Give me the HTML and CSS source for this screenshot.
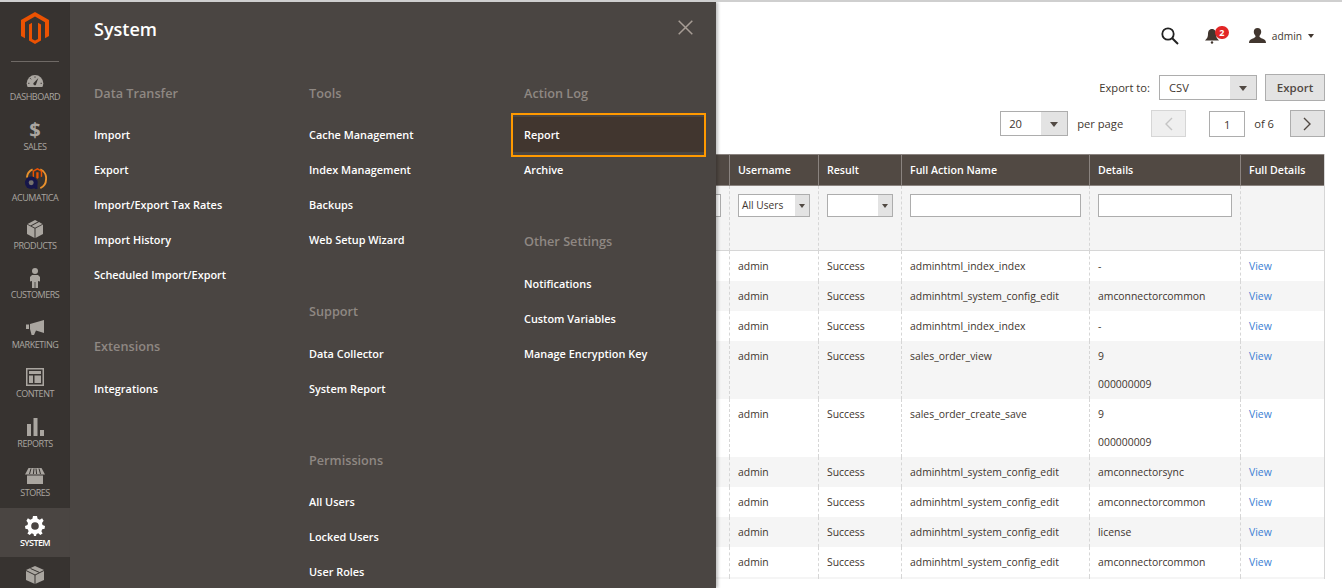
FILE: index.html
```html
<!DOCTYPE html>
<html lang="en">
<head>
    <meta charset="UTF-8">
    <meta name="viewport" content="width=device-width, initial-scale=1.0">
    <title>Action Log Report</title>
    <link rel="stylesheet" href="styles.css">
</head>
<body>
    <div class="page">
        <!-- left menu -->
        <aside class="sidebar">
            <div class="logo">
                <svg width="28" height="32" viewBox="0 0 28 32"><path fill="#eb5202" d="M14 0L28 8V24L24 26.3V10.2L14 4.5L4 10.2V26.3L0 24V8Z"/><path fill="#eb5202" d="M14 32L8 28.6V12.5L11 10.8V26.9L14 28.6L17 26.9V10.8L20 12.5V28.6Z"/></svg>
            </div>
            <nav class="side-nav">
                <a class="side-item">
                    <span class="side-icon"><svg class="icon-gauge" width="18" height="12" viewBox="0 0 18 13"><path fill="#aaa6a0" d="M9 0A9 9 0 0 0 0 9C0 10.500 .4 11.800 1 13H17C17.600 11.800 18 10.500 18 9A9 9 0 0 0 9 0Z"/><path fill="#373330" d="M12.600 3.200L8 8.200A1.600 1.600 0 1 0 10.400 9.600Z"/><path stroke="#373330" stroke-width="1" d="M3 9H1.500M4.800 4.600L3.700 3.500M9 3V1.500M15 9H16.500"/></svg></span>
                    <span class="side-label">Dashboard</span>
                </a>
                <a class="side-item">
                    <span class="side-icon side-dollar">$</span>
                    <span class="side-label">Sales</span>
                </a>
                <a class="side-item side-item-acumatica">
                    <span class="side-icon"><svg width="23" height="23" viewBox="0 0 24 24"><path fill="none" stroke="#e8912d" stroke-width="2" d="M3 11A10 10 0 0 1 9 2.500M17 2.500A10 10 0 0 1 23 13A10 10 0 0 1 17 22"/><path fill="#eb5202" d="M14 1L19 3.800V10L17.500 10.800V4.800L14 2.900L10.500 4.800V10.800L9 10V3.800Z"/><path fill="#eb5202" d="M12.800 5.500H15.200V11.500L14 12.200L12.800 11.500Z"/><circle cx="7.500" cy="16.500" r="6.500" fill="#16164a"/><circle cx="7.500" cy="16.500" r="2.600" fill="#77736f"/><rect x="11" y="14" width="3" height="9" fill="#16164a"/></svg></span>
                    <span class="side-label">Acumatica</span>
                </a>
                <a class="side-item">
                    <span class="side-icon"><svg width="16" height="18" viewBox="0 0 16 18"><path fill="#aaa6a0" d="M0 4.500L7.500 8.500V18L0 14ZM16 4.500V14L8.500 18V8.500ZM8 0L11 1.500L3.500 5.500L.6 4ZM12 2L15.400 4L8 7.800L4.600 6Z"/></svg></span>
                    <span class="side-label">Products</span>
                </a>
                <a class="side-item">
                    <span class="side-icon"><svg width="10" height="20" viewBox="0 0 10 20"><circle cx="5" cy="3" r="3" fill="#aaa6a0"/><path fill="#aaa6a0" d="M2 7H8L10 9V13.500L8 13V20H5.400V14H4.600V20H2V13L0 13.500V9Z"/></svg></span>
                    <span class="side-label">Customers</span>
                </a>
                <a class="side-item">
                    <span class="side-icon"><svg width="18" height="15" viewBox="0 0 18 15"><path fill="#aaa6a0" d="M0 4.500H3V9H0ZM4 4L18 0V13L10 10.500L8 15H5.600L4 9Z"/></svg></span>
                    <span class="side-label">Marketing</span>
                </a>
                <a class="side-item">
                    <span class="side-icon"><svg width="18" height="18" viewBox="0 0 18 18"><path fill="#aaa6a0" fill-rule="evenodd" d="M0 0H18V18H0ZM1.500 1.500V16.500H16.500V1.500ZM3 3H15V6H3ZM3 7.500H7V15H3ZM8.500 7.500H15V15H8.500Z"/></svg></span>
                    <span class="side-label">Content</span>
                </a>
                <a class="side-item">
                    <span class="side-icon"><svg width="17" height="18" viewBox="0 0 17 18"><path fill="#aaa6a0" d="M0 6H4V18H0ZM6.500 0H10.500V18H6.500ZM13 12H17V18H13Z"/></svg></span>
                    <span class="side-label">Reports</span>
                </a>
                <a class="side-item">
                    <span class="side-icon"><svg width="20" height="16" viewBox="0 0 20 16"><path fill="#aaa6a0" d="M3.500 0H16.500L20 6.500H0ZM2 7.500H18V16H2Z"/><path stroke="#373330" stroke-width="1" d="M6 0.500L4.500 6M9 0.500L8.400 6M11 0.500L11.600 6M14 0.500L15.500 6"/></svg></span>
                    <span class="side-label">Stores</span>
                </a>
                <a class="side-item side-item-active">
                    <span class="side-icon"><svg width="20" height="20" viewBox="0 0 20 20"><path fill="#fff" fill-rule="evenodd" d="M8 0H12L12.600 2.800L14.800 3.700L17.100 2.200L18.600 4.700L17 6.900L17.500 9L20 10L19.600 12.700L17.200 13.300L16.400 15.300L17.600 17.500L15.300 19L13.300 17.300L11.500 18L11 20H9L8.500 18L6.700 17.300L4.700 19L2.400 17.500L3.600 15.300L2.800 13.300L.4 12.700L0 10L2.500 9L3 6.900L1.400 4.700L2.900 2.200L5.200 3.700L7.400 2.800ZM10 6.200A3.800 3.800 0 1 0 10 13.800A3.800 3.800 0 1 0 10 6.200Z"/></svg></span>
                    <span class="side-label">System</span>
                </a>
                <a class="side-item">
                    <span class="side-icon"><svg width="18" height="18" viewBox="0 0 18 18"><path fill="#aaa6a0" d="M9 0L18 4V14L9 18L0 14V4Z"/><path stroke="#373330" fill="none" d="M0 4.500L9 9L18 4.500M9 9V18M4.500 2.500L13.500 6.500"/></svg></span>
                </a>
            </nav>
        </aside>

        <!-- grid page behind the menu -->
        <main class="content">
            <header class="topbar">
                <svg class="search-icon" width="18" height="18" viewBox="0 0 18 18"><circle cx="7" cy="7" r="5.700" fill="none" stroke="#222" stroke-width="1.800"/><path stroke="#222" stroke-width="2" d="M11.200 11.200L17 17"/></svg>
                <span class="bell">
                    <svg width="14" height="16" viewBox="0 0 14 16"><path fill="#41362f" d="M7 1C4 1 3 3.500 3 6C3 9 2 10.500 0 12.500H14C12 10.500 11 9 11 6C11 3.500 10 1 7 1Z"/><circle cx="7" cy="14.500" r="1.200" fill="#41362f"/></svg>
                    <span class="badge">2</span>
                </span>
                <span class="user">
                    <svg width="17" height="15" viewBox="0 0 16 15" preserveAspectRatio="none"><path fill="#41362f" d="M8 0C5.800 0 4.500 1.500 4.500 3.800C4.500 5.500 5.300 7 6.200 8C6.200 9.400 5 10 3 10.800C1 11.600 0 12.600 0 15H16C16 12.600 15 11.600 13 10.800C11 10 9.800 9.400 9.800 8C10.700 7 11.500 5.500 11.500 3.800C11.500 1.500 10.200 0 8 0Z"/></svg>
                    <span class="user-name">admin</span>
                    <span class="caret"></span>
                </span>
            </header>

            <div class="toolbar">
                <span class="toolbar-label export-label">Export to:</span>
                <div class="select select-export"><span class="select-value">CSV</span><span class="select-arrow"></span></div>
                <button class="btn btn-export">Export</button>
            </div>
            <div class="toolbar toolbar-pager">
                <div class="select select-page"><span class="select-value">20</span><span class="select-arrow"></span></div>
                <span class="toolbar-label per-page">per page</span>
                <button class="btn btn-page btn-disabled">
                    <svg width="9" height="14" viewBox="0 0 9 14"><path fill="none" stroke="#c4c4c4" stroke-width="1.400" d="M8 1L2 7L8 13"/></svg>
                </button>
                <div class="page-input">1</div>
                <span class="toolbar-label of-pages">of 6</span>
                <button class="btn btn-page">
                    <svg width="9" height="14" viewBox="0 0 9 14"><path fill="none" stroke="#514943" stroke-width="1.400" d="M1 1L7 7L1 13"/></svg>
                </button>
            </div>

            <table class="grid">
                <colgroup>
                    <col class="col-hidden"><col class="col-user"><col class="col-result"><col class="col-action"><col class="col-details"><col class="col-full">
                </colgroup>
                <thead>
                    <tr class="grid-head">
                        <th></th><th>Username</th><th>Result</th><th>Full Action Name</th><th>Details</th><th>Full Details</th>
                    </tr>
                    <tr class="grid-filter">
                        <td><div class="filter-input"></div></td>
                        <td><div class="select select-filter"><span class="select-value">All Users</span><span class="select-arrow"></span></div></td>
                        <td><div class="select select-filter"><span class="select-value"></span><span class="select-arrow"></span></div></td>
                        <td><div class="filter-input"></div></td>
                        <td><div class="filter-input"></div></td>
                        <td></td>
                    </tr>
                </thead>
                <tbody>
                    <tr><td></td><td>admin</td><td>Success</td><td>adminhtml_index_index</td><td>-</td><td><a>View</a></td></tr>
                    <tr><td></td><td>admin</td><td>Success</td><td>adminhtml_system_config_edit</td><td>amconnectorcommon</td><td><a>View</a></td></tr>
                    <tr><td></td><td>admin</td><td>Success</td><td>adminhtml_index_index</td><td>-</td><td><a>View</a></td></tr>
                    <tr><td></td><td>admin</td><td>Success</td><td>sales_order_view</td><td>9<br>000000009</td><td><a>View</a></td></tr>
                    <tr><td></td><td>admin</td><td>Success</td><td>sales_order_create_save</td><td>9<br>000000009</td><td><a>View</a></td></tr>
                    <tr><td></td><td>admin</td><td>Success</td><td>adminhtml_system_config_edit</td><td>amconnectorsync</td><td><a>View</a></td></tr>
                    <tr><td></td><td>admin</td><td>Success</td><td>adminhtml_system_config_edit</td><td>amconnectorcommon</td><td><a>View</a></td></tr>
                    <tr><td></td><td>admin</td><td>Success</td><td>adminhtml_system_config_edit</td><td>license</td><td><a>View</a></td></tr>
                    <tr><td></td><td>admin</td><td>Success</td><td>adminhtml_system_config_edit</td><td>amconnectorcommon</td><td><a>View</a></td></tr>
                    <tr><td></td><td></td><td></td><td></td><td></td><td></td></tr>
                </tbody>
            </table>
        </main>

        <!-- open System submenu, lies over the grid -->
        <section class="panel">
            <h1 class="panel-title">System</h1>
            <svg class="panel-close" width="15" height="15" viewBox="0 0 15 15"><path stroke="#a79d95" stroke-width="1.500" d="M.7 .7L14.300 14.300M14.300 .7L.7 14.300"/></svg>
            <div class="panel-cols">
                <div class="panel-col">
                    <div class="menu-group menu-group-first">
                        <h2>Data Transfer</h2>
                        <a class="menu-item">Import</a>
                        <a class="menu-item">Export</a>
                        <a class="menu-item">Import/Export Tax Rates</a>
                        <a class="menu-item">Import History</a>
                        <a class="menu-item">Scheduled Import/Export</a>
                    </div>
                    <div class="menu-group">
                        <h2>Extensions</h2>
                        <a class="menu-item">Integrations</a>
                    </div>
                </div>
                <div class="panel-col">
                    <div class="menu-group menu-group-first">
                        <h2>Tools</h2>
                        <a class="menu-item">Cache Management</a>
                        <a class="menu-item">Index Management</a>
                        <a class="menu-item">Backups</a>
                        <a class="menu-item">Web Setup Wizard</a>
                    </div>
                    <div class="menu-group">
                        <h2>Support</h2>
                        <a class="menu-item">Data Collector</a>
                        <a class="menu-item">System Report</a>
                    </div>
                    <div class="menu-group menu-group-low">
                        <h2>Permissions</h2>
                        <a class="menu-item">All Users</a>
                        <a class="menu-item">Locked Users</a>
                        <a class="menu-item">User Roles</a>
                    </div>
                </div>
                <div class="panel-col">
                    <div class="menu-group menu-group-first">
                        <h2>Action Log</h2>
                        <div class="menu-focus"><a class="menu-item">Report</a></div>
                        <a class="menu-item">Archive</a>
                    </div>
                    <div class="menu-group">
                        <h2>Other Settings</h2>
                        <a class="menu-item">Notifications</a>
                        <a class="menu-item">Custom Variables</a>
                        <a class="menu-item">Manage Encryption Key</a>
                    </div>
                </div>
            </div>
        </section>
    </div>
</body>
</html>
```

FILE: styles.css
```css
html, body {
    margin: 0;
    height: 100%;
    overflow: hidden;
}
body {
    font-family: "Open Sans", sans-serif;
    font-size: 10.4px;
    color: #41362f;
    background-color: #fff;
}
.page {
    position: relative;
    display: flex;
    height: 586px;
    border-top: 2px solid #cfcfcf;
    overflow: hidden;
}

/* left menu */
.sidebar {
    flex: 0 0 70px;
    background-color: #373330;
}
.logo {
    display: flex;
    justify-content: center;
    padding-top: 10px;
    height: 39px;
}
.logo svg {
    display: block;
}
.side-nav {
    border-top: 1px solid #6f6a66;
    margin: 10px 11px 0;
}
.side-item {
    display: flex;
    flex-direction: column;
    align-items: center;
    height: 49.56px;
    margin: 0 -11px;
    padding-top: 7px;
    box-sizing: border-box;
    color: #aaa6a0;
}
.side-icon {
    display: flex;
    align-items: center;
    justify-content: center;
    height: 22px;
}
.icon-gauge {
    margin-top: 2px;
}
.side-dollar {
    font-size: 20px;
    font-weight: 700;
    line-height: 22px;
}
.side-label {
    font-size: 9px;
    line-height: 12px;
    letter-spacing: -0.45px;
    text-transform: uppercase;
    white-space: nowrap;
}
.side-item-acumatica .side-icon {
    position: relative;
    top: -1px;
}
.side-item-acumatica .side-label {
    margin-top: 2px;
}
.side-item-active {
    background-color: #4a4542;
    color: #fff;
}
.side-item-active .side-label {
    font-weight: 600;
    letter-spacing: -0.6px;
}

/* page behind the menu */
.content {
    flex: 1;
    min-width: 0;
    padding: 0 17px 0 18px;
}
.topbar {
    display: flex;
    align-items: center;
    justify-content: flex-end;
    box-sizing: border-box;
    height: 72px;
    padding-right: 11px;
    padding-bottom: 5px;
}
.search-icon {
    margin-right: 26px;
}
.bell {
    position: relative;
    display: flex;
    margin-right: 30px;
    margin-top: 1px;
}
.badge {
    position: absolute;
    top: -2px;
    left: 10px;
    width: 14px;
    height: 13px;
    border-radius: 7px;
    background-color: #e22626;
    color: #fff;
    font-size: 9px;
    font-weight: 700;
    line-height: 13px;
    text-align: center;
}
.user {
    display: flex;
    align-items: center;
}
.user-name {
    margin-left: 6px;
    margin-right: 6px;
    font-size: 10.2px;
}
.caret {
    width: 0;
    height: 0;
    border-left: 3px solid transparent;
    border-right: 3px solid transparent;
    border-top: 4px solid #41362f;
}
.toolbar {
    display: flex;
    align-items: center;
    justify-content: flex-end;
    height: 27px;
}
.toolbar-pager {
    margin-top: 9px;
}
.toolbar-label {
    font-size: 11.2px;
}
.export-label {
    margin-right: 9px;
}
.per-page {
    margin-left: 9px;
    margin-right: 28px;
}
.of-pages {
    margin-left: 9px;
    margin-right: 16px;
}
.select {
    display: flex;
    box-sizing: border-box;
    height: 25px;
    border: 1px solid #adadad;
    background-color: #fff;
}
.select-value {
    flex: 1;
    padding-left: 8px;
    line-height: 23px;
    font-size: 11.2px;
}
.select-arrow {
    position: relative;
    flex: 0 0 26px;
    background-color: #e3e3e3;
}
.select-arrow::after {
    content: "";
    position: absolute;
    top: 50%;
    left: 50%;
    margin: -2px 0 0 -4px;
    border-left: 4px solid transparent;
    border-right: 4px solid transparent;
    border-top: 5px solid #514943;
}
.select-export {
    width: 98px;
}
.select-export .select-value {
    padding-left: 9px;
}
.select-page {
    width: 68px;
}
.select-filter {
    height: 23px;
    width: 100%;
}
.select-filter .select-value {
    padding-left: 3px;
    line-height: 21px;
    font-size: 10.2px;
}
.select-filter .select-arrow {
    flex-basis: 14px;
}
.select-filter .select-arrow::after {
    margin-left: -3px;
    border-left-width: 3px;
    border-right-width: 3px;
    border-top-width: 4px;
}
.btn {
    box-sizing: border-box;
    height: 27px;
    padding: 0;
    border: 1px solid #adadad;
    background-color: #e3e3e3;
    color: #514943;
    font-family: inherit;
    font-size: 11.5px;
    font-weight: 600;
}
.btn-export {
    width: 60px;
    margin-left: 8px;
}
.btn-page {
    display: flex;
    align-items: center;
    justify-content: center;
    width: 35px;
}
.btn-disabled {
    background-color: #efefef;
    border-color: #d6d6d6;
}
.page-input {
    box-sizing: border-box;
    width: 36px;
    height: 26px;
    margin-top: 1px;
    margin-left: 23px;
    border: 1px solid #adadad;
    line-height: 26px;
    text-align: center;
    font-size: 11.2px;
}

/* grid */
.grid {
    width: 1236px;
    margin-top: 17px;
    border-spacing: 0;
    table-layout: fixed;
    border-right: 1px solid #d6d6d6;
}
.col-hidden { width: 641px; }
.col-user { width: 89px; }
.col-result { width: 83px; }
.col-action { width: 188px; }
.col-details { width: 151px; }
.col-full { width: 84px; }
.grid-head th {
    box-sizing: border-box;
    height: 32px;
    padding: 0 8px 1px;
    border-top: 1px solid #8a837f;
    border-bottom: 1px solid #8a837f;
    border-left: 1px solid #8a837f;
    background-color: #514943;
    color: #fff;
    font-size: 10.6px;
    font-weight: 600;
    text-align: left;
}
.grid-filter td {
    box-sizing: border-box;
    height: 65px;
    padding: 8px 8px 0;
    vertical-align: top;
    background-color: #f4f4f4;
    border-left: 1px dashed #d6d6d6;
    border-bottom: 1px solid #d6d6d6;
}
.filter-input {
    box-sizing: border-box;
    height: 23px;
    border: 1px solid #adadad;
    background-color: #fff;
}
.grid tbody td {
    padding: 1px 8px;
    line-height: 28px;
    vertical-align: top;
    border-left: 1px dashed #d6d6d6;
    white-space: nowrap;
}
.grid tbody tr:nth-child(even) td {
    background-color: #f5f5f5;
}
.grid a {
    color: #3b7fd4;
}

/* open submenu */
.panel {
    position: absolute;
    top: 0;
    bottom: 0;
    left: 70px;
    width: 646px;
    box-sizing: border-box;
    padding-left: 24px;
    background-color: #4a4542;
    color: #fff;
    box-shadow: 2px 0 3px rgba(0, 0, 0, 0.25);
}
.panel-title {
    margin: 15px 0 41px;
    font-size: 18px;
    line-height: 25px;
    font-weight: 600;
}
.panel-close {
    position: absolute;
    top: 18px;
    right: 23px;
}
.panel-cols {
    display: grid;
    grid-template-columns: 215px 215px 215px;
}
.menu-group {
    margin-bottom: 43.5px;
}
.menu-group h2 {
    margin: 0 0 14.5px;
    font-size: 12.7px;
    line-height: 20px;
    font-weight: 600;
    color: #8f8883;
}
.menu-group-first {
    margin-bottom: 44.5px;
}
.menu-group-first h2 {
    margin-bottom: 13.5px;
}
.menu-item {
    display: block;
    height: 35px;
    font-size: 10.9px;
    font-weight: 600;
    line-height: 35px;
    white-space: nowrap;
}
.menu-group-low {
    padding-top: 1px;
}
.menu-group-low h2 {
    margin-bottom: 13.5px;
}
.menu-focus {
    box-sizing: border-box;
    width: 195px;
    margin: -3.5px 0 -5.5px -13px;
    padding: 2px 0 3px;
    border: 2px solid #f90;
}
.menu-focus .menu-item {
    padding-left: 11px;
    background-color: #41362f;
}
```
